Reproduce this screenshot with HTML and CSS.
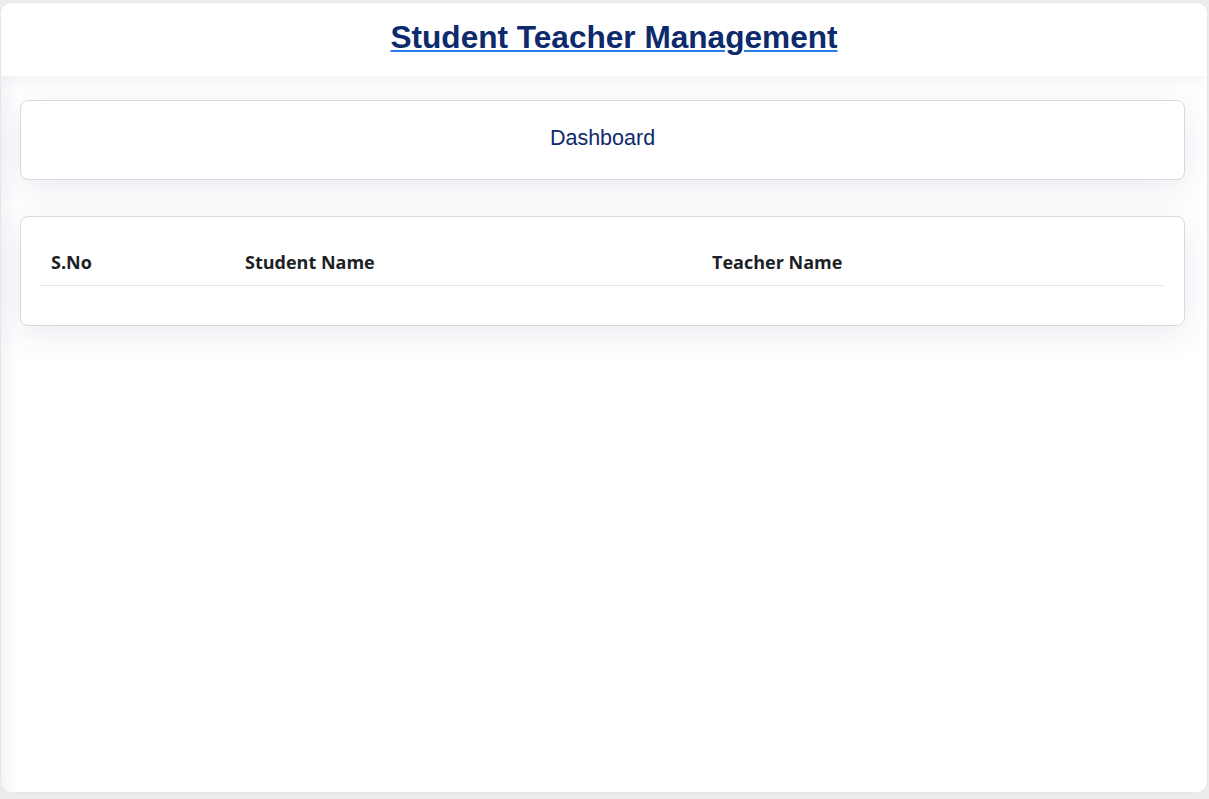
FILE: index.html
```html
<!DOCTYPE html>
<html lang="en">
<head>
<meta charset="utf-8">
<title>Student Teacher Management</title>
<link rel="stylesheet" href="styles.css">
</head>
<body>
<div class="app">
  <header class="topbar">
    <h1 class="title"><a href="#">Student Teacher Management</a></h1>
  </header>
  <main class="content">
    <section class="card nav-card">
      <span class="nav-link">Dashboard</span>
    </section>
    <section class="card table-card">
      <table class="list">
        <thead>
          <tr>
            <th class="col-sno">S.No</th>
            <th class="col-student">Student Name</th>
            <th class="col-teacher">Teacher Name</th>
          </tr>
        </thead>
        <tbody></tbody>
      </table>
    </section>
  </main>
</div>
</body>
</html>
```
FILE: styles.css
```css
* { box-sizing: border-box; }
html, body { height: 100%; }
body {
  margin: 0;
  background: #ececec;
  font-family: "Liberation Sans", Arial, sans-serif;
  padding: 2px 1px 6px 0;
}
.app {
  height: 791px;
  background: #fff;
  border-radius: 12px;
  border: 1px solid #e6e6e6;
  overflow: hidden;
  display: flex;
  flex-direction: column;
}
.topbar {
  height: 73px;
  background: #fff;
  display: flex;
  align-items: center;
  justify-content: center;
  padding-left: 20px;
  box-shadow: 0 4px 14px rgba(40, 50, 90, 0.07);
  position: relative;
  z-index: 1;
}
.title {
  margin: 0;
  font-size: 31.6px;
  font-weight: 700;
  line-height: 1;
  padding-bottom: 3px;
}
.title a {
  color: #0d2a6c;
  text-decoration: underline;
  text-decoration-color: #2a7af0;
  text-decoration-thickness: 2px;
  text-underline-offset: 2px;
}
.content {
  flex: 1;
  padding: 24px 22px 0 19px;
  background: linear-gradient(90deg, #f3f4f8 0, #fafbfc 10px, #fff 18px);
  display: flex;
  flex-direction: column;
  gap: 36px;
}
.card {
  background: #fff;
  border: 1px solid #d6d9de;
  border-radius: 8px;
  box-shadow: 0 8px 32px rgba(40, 55, 110, 0.1);
}
.nav-card {
  height: 80px;
  display: flex;
  align-items: center;
  justify-content: center;
}
.nav-link {
  color: #0d2a6c;
  font-size: 21.5px;
  padding-bottom: 3px;
}
.table-card {
  padding: 19px 20px 39px 19px;
}
.list {
  width: 100%;
  border-collapse: collapse;
  font-family: "Open Sans", "Noto Sans", sans-serif;
}
.list th {
  text-align: left;
  font-weight: 700;
  font-size: 18px;
  line-height: 24px;
  color: #1c1f24;
  padding: 14px 10px 11px 11px;
  border-bottom: 1px solid #e3e5e8;
}
.col-sno { width: 194px; }
.col-student { width: 467px; }
```
